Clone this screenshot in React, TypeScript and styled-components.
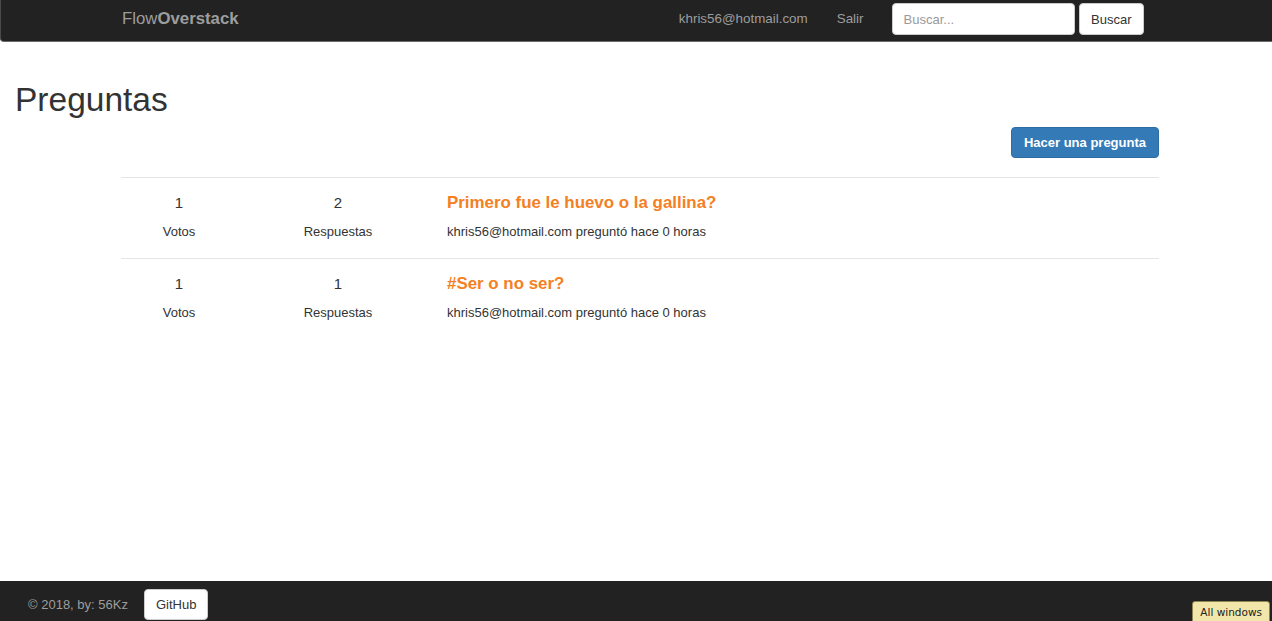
import React from "react";
import styled, { createGlobalStyle } from "styled-components";

const GlobalStyle = createGlobalStyle`
  html, body { margin: 0; padding: 0; }
  body {
    font-family: "Liberation Sans", Arial, Helvetica, sans-serif;
    font-size: 13px;
    line-height: 1.43;
    color: #333;
    background: #fff;
  }
  * { box-sizing: border-box; }
`;

const Page = styled.div`
  min-height: 100vh;
  display: flex;
  flex-direction: column;
`;

const Navbar = styled.nav`
  height: 42px;
  background: #222;
  border-bottom: 1px solid #6b6b6b;
  border-left: 1px solid #4a4a4a;
  border-radius: 0 0 0 4px;
  display: flex;
  align-items: center;
  justify-content: space-between;
  padding: 0 128px 3px 121px;
`;

const Brand = styled.a`
  color: #9d9d9d;
  font-size: 16.8px;
  text-decoration: none;
  line-height: 20px;
  b { font-weight: 700; }
`;

const NavRight = styled.div`
  display: flex;
  align-items: center;
`;

const NavLink = styled.a<{ $gap: number }>`
  color: #9d9d9d;
  font-size: 13.4px;
  text-decoration: none;
  margin-right: ${(p) => p.$gap}px;
`;

const SearchInput = styled.input`
  width: 183px;
  height: 32px;
  border: 1px solid #ccc;
  border-radius: 4px;
  padding: 0 11px;
  font-family: inherit;
  font-size: 13px;
  color: #555;
  background: #fff;
  &::placeholder { color: #999; }
`;

const DefaultButton = styled.button`
  height: 32px;
  padding: 0 11.5px;
  margin-left: 4px;
  background: #fff;
  border: 1px solid #ccc;
  border-radius: 4px;
  font-family: inherit;
  font-size: 13px;
  color: #333;
`;

const Main = styled.main`
  flex: 1;
  display: flex;
  flex-direction: column;
`;

const Heading = styled.h1`
  margin: 40px 0 0 15px;
  font-size: 33.5px;
  font-weight: 500;
  line-height: 1.1;
  color: #333;
`;

const Toolbar = styled.div`
  display: flex;
  justify-content: flex-end;
  padding-right: 113px;
  margin-top: 8px;
`;

const PrimaryButton = styled.button`
  height: 31px;
  padding: 0 12px;
  background: #337ab7;
  border: 1px solid #2e6da4;
  border-radius: 4px;
  color: #fff;
  font-family: inherit;
  font-size: 13px;
  font-weight: 700;
`;

const List = styled.div`
  margin: 19px 113px 0 121px;
`;

const Row = styled.div`
  display: grid;
  grid-template-columns: 116px 202px 1fr;
  border-top: 1px solid #e5e5e5;
  padding: 15px 0 17px;
`;

const Stat = styled.div`
  display: flex;
  flex-direction: column;
  align-items: center;
`;

const StatValue = styled.div`
  font-size: 15px;
  line-height: 20px;
  margin-bottom: 9px;
  color: #333;
`;

const StatLabel = styled.div`
  font-size: 13px;
  line-height: 19px;
  color: #333;
`;

const QuestionBody = styled.div`
  padding-left: 8px;
`;

const QuestionTitle = styled.a`
  display: block;
  font-size: 16.9px;
  font-weight: 700;
  line-height: 20px;
  margin-bottom: 9px;
  color: #f48024;
  text-decoration: none;
`;

const QuestionMeta = styled.div`
  font-size: 13px;
  line-height: 19px;
  color: #333;
`;

const Footer = styled.footer`
  height: 40px;
  background: #222;
  display: flex;
  align-items: flex-start;
  padding: 8px 0 0 28px;
  overflow: hidden;
`;

const FooterText = styled.span`
  color: #9d9d9d;
  font-size: 13px;
  line-height: 31px;
  margin-right: 16px;
`;

const FooterButton = styled.button`
  height: 31px;
  padding: 0 11px;
  background: #fff;
  border: 1px solid #ccc;
  border-radius: 4px;
  font-family: inherit;
  font-size: 13px;
  color: #333;
`;

const WindowsBadge = styled.div`
  position: fixed;
  right: 2px;
  bottom: -4px;
  height: 24px;
  padding: 2px 7px 0;
  background: #f1e7ab;
  border: 1px solid #8f8552;
  border-radius: 3px 3px 0 0;
  font-family: "DejaVu Sans", sans-serif;
  font-size: 10.5px;
  line-height: 16px;
  color: #222;
`;

const questions = [
  { votes: 1, answers: 2, title: "Primero fue le huevo o la gallina?" },
  { votes: 1, answers: 1, title: "#Ser o no ser?" },
];

export default function App() {
  return (
    <Page>
      <GlobalStyle />
      <Navbar>
        <Brand href="#">
          Flow<b>Overstack</b>
        </Brand>
        <NavRight>
          <NavLink href="#" $gap={29}>
            khris56@hotmail.com
          </NavLink>
          <NavLink href="#" $gap={28}>
            Salir
          </NavLink>
          <SearchInput placeholder="Buscar..." />
          <DefaultButton>Buscar</DefaultButton>
        </NavRight>
      </Navbar>
      <Main>
        <Heading>Preguntas</Heading>
        <Toolbar>
          <PrimaryButton>Hacer una pregunta</PrimaryButton>
        </Toolbar>
        <List>
          {questions.map((q, i) => (
            <Row key={i}>
              <Stat>
                <StatValue>{q.votes}</StatValue>
                <StatLabel>Votos</StatLabel>
              </Stat>
              <Stat>
                <StatValue>{q.answers}</StatValue>
                <StatLabel>Respuestas</StatLabel>
              </Stat>
              <QuestionBody>
                <QuestionTitle href="#">{q.title}</QuestionTitle>
                <QuestionMeta>khris56@hotmail.com preguntó hace 0 horas</QuestionMeta>
              </QuestionBody>
            </Row>
          ))}
        </List>
      </Main>
      <Footer>
        <FooterText>© 2018, by: 56Kz</FooterText>
        <FooterButton>GitHub</FooterButton>
      </Footer>
      <WindowsBadge>All windows</WindowsBadge>
    </Page>
  );
}
